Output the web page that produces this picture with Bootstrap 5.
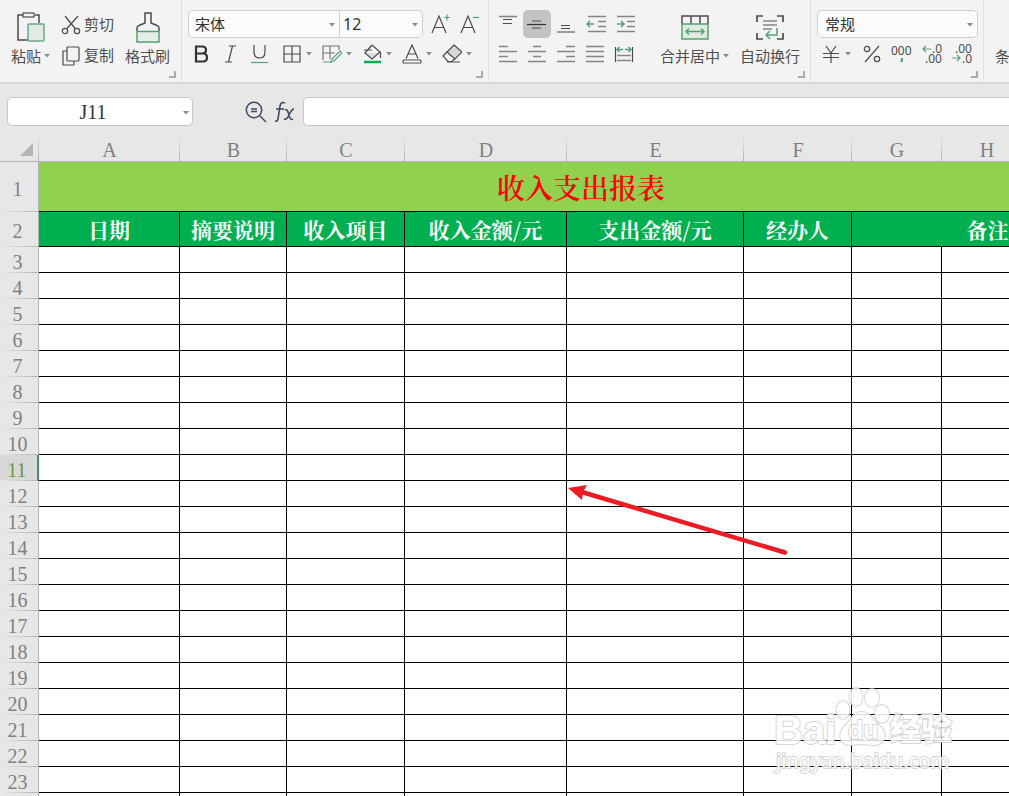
<!DOCTYPE html>
<html lang="zh-CN">
<head>
<meta charset="utf-8">
<meta name="viewport" content="width=device-width, initial-scale=1">
<title>收入支出报表</title>
<link rel="stylesheet" href="https://cdn.jsdelivr.net/npm/bootstrap@5.3.0/dist/css/bootstrap.min.css">
<style>
  body { background: #e7e7e7; font-family: "Noto Sans", "Noto Sans CJK SC", sans-serif; font-size: 15px; color: #505050; min-height: 100vh; overflow: hidden; }
  svg { fill: none; stroke: #4c4c4c; stroke-width: 1.2; flex: none; display: block; }
  svg text { stroke: none; fill: #4c4c4c; }
  .g { stroke: #55a176; }
  .al { stroke: #858585; stroke-width: 1.6; }
  .ribbon { background: #f3f3f3; border-bottom: 2px solid #d8d8d8; height: 84px; }
  .tool-group { position: relative; flex: none; padding-top: 10px; }
  .tool-group + .tool-group { border-left: 1px solid #e1e1e1; background-clip: padding-box; }
  .tool { border: 0; background: none; padding: 0; width: 28px; height: 28px; border-radius: 5px; display: flex; align-items: center; justify-content: center; color: inherit; flex: none; }
  .tool.split { width: 40px; padding-left: 4px; justify-content: flex-start; gap: 4px; }
  .tool.active { background: #c3c3c3; }
  .tool.wide { width: 30px; }
  .pitch { gap: 1px; }
  .tool-rows { display: grid; row-gap: 2px; align-content: start; }
  .big-tool { border: 0; background: none; padding: 0; color: inherit; display: flex; flex-direction: column; align-items: center; line-height: 20px; white-space: nowrap; }
  .big-tool .pic { height: 36px; display: flex; align-items: center; }
  .big-tool .cap { display: flex; align-items: center; gap: 3px; }
  .line-tool { border: 0; background: none; padding: 0; color: inherit; height: 29px; display: flex; align-items: center; gap: 3px; white-space: nowrap; }
  .first-tool { margin-left: 11px; }
  .caret { fill: #8a8a8a; stroke: none; }
  .launcher { position: absolute; right: 5px; bottom: 4px; }
  .pick { position: relative; }
  .pick select { appearance: none; width: 100%; height: 28px; border: 1px solid #cfcfcf; background: #fbfbfb; color: #333; padding: 0 6px; line-height: 26px; }
  .pick .caret { position: absolute; right: 5px; top: 13px; pointer-events: none; }
  .font-name { width: 152px; } .font-name select { border-radius: 5px 0 0 5px; }
  .font-size { width: 84px; margin-left: -1px; } .font-size select { border-radius: 0 5px 5px 0; padding-left: 3px; font-size: 16px; }
  .num-format { width: 161px; } .num-format select { border-radius: 5px; padding-left: 7px; }
  .formula-bar { height: 51px; padding: 13px 0 9px 7px; align-items: flex-start; }
  .name-box { width: 186px; }
  .name-box input, .formula-input { border: 1px solid #c6c6c6; border-radius: 5px; background: #fff; height: 29px; }
  .name-box input { width: 100%; text-align: center; font: 20px "Liberation Serif", serif; color: #333; padding: 2px 14px 0 0; }
  .name-box .caret { position: absolute; right: 4px; top: 14px; }
  .formula-input { border-right: 0; border-radius: 5px 0 0 5px; }
  .bar-tool { border: 0; background: none; padding: 0; height: 29px; display: flex; align-items: center; stroke: #3f4a66; }
  .bar-tool svg { stroke: #3f4a66; }
  .sheet-area { position: relative; overflow: hidden; }
  .sheet { table-layout: fixed; width: 1124px; border-collapse: separate; border-spacing: 0; font-family: "Noto Serif CJK SC", "Noto Sans CJK SC", serif; }
  .sheet th, .sheet td { padding: 0; text-align: center; vertical-align: middle; }
  .sheet td { background: #fff; height: 26px; border-right: 1px solid #000; border-bottom: 1px solid #000; }
  .sheet th { font-family: "Liberation Serif", serif; font-weight: 400; font-size: 20px; line-height: 22px; color: #808080; }
  .sheet thead th { height: 27px; padding-top: 4px; border-bottom: 1px solid #b4b4b4; background: linear-gradient(#e7e7e7, #b4b4b4) right / 1px 100% no-repeat; }
  .sheet tbody th { padding: 3px 3px 0 0; border-right: 1px solid #b4b4b4; background: linear-gradient(90deg, #e7e7e7, #b4b4b4) bottom / 100% 1px no-repeat; }
  .sheet tbody tr.current th { background-color: #d8d8d8; color: #6c9a3c; border-right: 2px solid #3c9a56; }
  .sheet td.report-title { height: 50px; background: #92d050; color: #f00; font-size: 28px; line-height: 36px; font-weight: 600; }
  .sheet .heads td { height: 35px; background: #00b050; color: #fff; font-size: 21px; line-height: 28px; font-weight: 700; white-space: nowrap; }
  .pointer-arrow { position: absolute; left: 566px; top: 348px; }
  .watermark { position: absolute; left: 770px; top: 548px; opacity: .85; }
  .watermark * { fill: #fff; stroke: #d0d0d0; stroke-width: 2; paint-order: stroke; }
</style>
</head>
<body>
<svg width="0" height="0" class="position-absolute" aria-hidden="true"><defs>
  <symbol id="car" viewBox="0 0 6 4"><path d="M0 0h6L3 3.5z" fill="#8a8a8a" stroke="none"/></symbol>
  <symbol id="corner" viewBox="0 0 7 7"><path d="M6 0v6H0" stroke="#aaa" stroke-width="2"/></symbol>
</defs></svg>

<header class="ribbon d-flex overflow-hidden">
  <section class="tool-group d-flex" style="width:181px" aria-label="剪贴板">
    <button class="big-tool first-tool align-self-start" type="button">
      <span class="pic"><svg width="30" height="32" viewBox="0 0 30 32"><path stroke-width="1.500" d="M7 3H2v25h10M19 3h4v8"/><rect x="7" y="1" width="11" height="4"/><rect x="12" y="12" width="16" height="17" rx="1" fill="#e1ebe4" stroke="#6aa886" stroke-width="1.500"/></svg></span>
      <span class="cap">粘贴<svg width="6" height="4"><use href="#car"/></svg></span>
    </button>
    <div class="tool-rows first-tool">
      <button class="line-tool" type="button"><svg width="20" height="20" viewBox="0 0 20 20"><path d="M4 1l10.500 13M17 1L5.500 14"/><circle cx="4" cy="16" r="2.700"/><circle cx="16" cy="16" r="2.700"/></svg>剪切</button>
      <button class="line-tool" type="button"><svg width="20" height="20" viewBox="0 0 20 20"><rect x="6" y="1" width="12" height="14" rx="1"/><path d="M6 5H2v14h11v-4"/></svg>复制</button>
    </div>
    <button class="big-tool first-tool align-self-start" type="button">
      <span class="pic"><svg width="26" height="32" viewBox="0 0 26 32"><path stroke-width="1.500" d="M2 19v-3q0-2 2-2.500l6-2.500V1h6v10l6 2.500q2 .5 2 2.500v3"/><path class="g" stroke-width="1.500" fill="#e5efe8" d="M2 19.500h22V30H2z"/></svg></span>
      <span class="cap">格式刷</span>
    </button>
    <svg class="launcher" width="7" height="7"><use href="#corner"/></svg>
  </section>

  <section class="tool-group tool-rows" style="width:307px;padding-left:6px" aria-label="字体">
    <div class="d-flex">
      <div class="pick font-name"><select aria-label="字体名称"><option>宋体</option></select><svg class="caret" width="6" height="4"><use href="#car"/></svg></div>
      <div class="pick font-size"><select aria-label="字号"><option>12</option></select><svg class="caret" width="6" height="4"><use href="#car"/></svg></div>
      <div class="d-flex pitch ms-1">
        <button class="tool" type="button" aria-label="增大字号"><svg width="20" height="22" viewBox="0 0 20 22"><path d="M1 20L8 3l7 17M3.500 14.500h9"/><path class="g" d="M13 4.500h6M16 1.500v6"/></svg></button>
        <button class="tool" type="button" aria-label="减小字号"><svg width="20" height="22" viewBox="0 0 20 22"><path d="M1 20L8 3l7 17M3.500 14.500h9"/><path class="g" d="M13 4.500h6"/></svg></button>
      </div>
    </div>
    <div class="d-flex">
      <div class="d-flex pitch me-1">
        <button class="tool" type="button" aria-label="加粗"><svg width="20" height="20" viewBox="0 0 20 20"><path stroke-width="2.200" stroke="#333" d="M4 2.500h6q4 0 4 3.500t-4 3.500H4zM4 9.500h7q4 0 4 4t-4 4H4z"/></svg></button>
        <button class="tool" type="button" aria-label="倾斜"><svg width="20" height="20" viewBox="0 0 20 20"><path d="M8 2h7M4 18h7M11.500 2l-4 16"/></svg></button>
        <button class="tool" type="button" aria-label="下划线"><svg width="20" height="22" viewBox="0 0 20 22"><path d="M4 2v7q0 6 5.500 6T15 9V2"/><path class="g" d="M1 19.500h17"/></svg></button>
      </div>
      <button class="tool split" type="button" aria-label="边框"><svg width="20" height="20" viewBox="0 0 20 20"><path d="M2 2h16v16H2zM10 2v16M2 10h16"/></svg><svg width="6" height="4"><use href="#car"/></svg></button>
      <button class="tool split" type="button" aria-label="绘图边框"><svg width="20" height="20" viewBox="0 0 20 20"><path d="M1 16V2h16v4M8 2v13M1 9h12" stroke="#777"/><path class="g" d="M1 18h8M9 18l1-3 8-8 2 2-8 8z"/></svg><svg width="6" height="4"><use href="#car"/></svg></button>
      <button class="tool split" type="button" aria-label="填充颜色"><svg width="20" height="20" viewBox="0 0 20 20"><path d="M4 9h14l-7 6z" fill="#ddd" stroke="none"/><path d="M2 6h8M10 1l8 7-8 7-7-6 7-8M18.500 8v6"/><path d="M2 18h17" stroke="#00b050" stroke-width="2.500"/></svg><svg width="6" height="4"><use href="#car"/></svg></button>
      <button class="tool split" type="button" aria-label="字体颜色"><svg width="20" height="20" viewBox="0 0 20 20"><path d="M4 14.500L10 1l6 13.500M6.500 10h7"/><rect x="1" y="16" width="18" height="3" rx="1" fill="#fff"/></svg><svg width="6" height="4"><use href="#car"/></svg></button>
      <button class="tool split" type="button" aria-label="清除"><svg width="20" height="20" viewBox="0 0 20 20"><path d="M12 1l8 7-7 7-8-7z" fill="#d8d8d8"/><path d="M5 8l-4 4 5 5.500h4l3-3M5 18h13"/></svg><svg width="6" height="4"><use href="#car"/></svg></button>
    </div>
    <svg class="launcher" width="7" height="7"><use href="#corner"/></svg>
  </section>

  <section class="tool-group d-flex" style="width:322px;padding-left:5px" aria-label="对齐方式">
    <div class="tool-rows">
      <div class="d-flex pitch">
        <button class="tool" type="button" aria-label="顶端对齐"><svg width="20" height="20" viewBox="0 0 20 20"><path class="al" d="M1 2.500h18"/><path d="M5 5.500h9M5 9.500h9"/></svg></button>
        <button class="tool active" type="button" aria-label="垂直居中"><svg width="20" height="20" viewBox="0 0 20 20"><path d="M5 7h9M5 14h9"/><path stroke="#333" d="M0 10.500h19"/></svg></button>
        <button class="tool" type="button" aria-label="底端对齐"><svg width="20" height="20" viewBox="0 0 20 20"><path d="M5 11.500h9M5 14.500h9"/><path class="al" d="M1 18h18"/></svg></button>
        <button class="tool wide" type="button" aria-label="减少缩进"><svg width="20" height="20" viewBox="0 0 20 20"><path class="al" d="M2 2.500h18M12 7.500h8M12 12.500h8M2 17.500h18"/><path class="g" stroke-width="1.500" d="M8 10H1M4 7l-3 3 3 3"/></svg></button>
        <button class="tool" type="button" aria-label="增加缩进"><svg width="20" height="20" viewBox="0 0 20 20"><path class="al" d="M1 2.500h18M11 7.500h8M11 12.500h8M1 17.500h18"/><path class="g" stroke-width="1.500" d="M1 10h7M5 7l3 3-3 3"/></svg></button>
      </div>
      <div class="d-flex pitch">
        <button class="tool" type="button" aria-label="左对齐"><svg width="20" height="20" viewBox="0 0 20 20"><path class="al" d="M1 2.500h9M1 7.500h18M1 12.500h9M1 17.500h18"/></svg></button>
        <button class="tool" type="button" aria-label="水平居中"><svg width="20" height="20" viewBox="0 0 20 20"><path class="al" d="M6 2.500h8M1 7.500h18M6 12.500h8M1 17.500h18"/></svg></button>
        <button class="tool" type="button" aria-label="右对齐"><svg width="20" height="20" viewBox="0 0 20 20"><path class="al" d="M10 2.500h9M1 7.500h18M10 12.500h9M1 17.500h18"/></svg></button>
        <button class="tool" type="button" aria-label="两端对齐"><svg width="20" height="20" viewBox="0 0 20 20"><path class="al" d="M1 2.500h18M1 7.500h18M1 12.500h18M1 17.500h18"/></svg></button>
        <button class="tool" type="button" aria-label="分散对齐"><svg width="20" height="20" viewBox="0 0 20 20"><path d="M1.500 3v15M18.500 3v15"/><path class="al" d="M3 11.500h14M3 16.500h14"/><path class="g" stroke-width="1.500" d="M9 5.500H3M5.500 3L3 5.500 5.500 8M11 5.500h6M14.500 3L17 5.500 14.500 8"/></svg></button>
      </div>
    </div>
    <button class="big-tool ms-3 ps-1 align-self-start" type="button">
      <span class="pic"><svg width="30" height="28" viewBox="0 0 30 28"><path stroke-width="1.500" d="M2 10V2h26v8M11 2v8M20 2v8"/><path class="g" stroke-width="1.500" fill="#dfeae2" d="M2 10h26v15H2z"/><path class="g" stroke-width="1.500" d="M6 17.500h18M9 14.500l-3 3 3 3M21 14.500l3 3-3 3"/></svg></span>
      <span class="cap">合并居中<svg width="6" height="4"><use href="#car"/></svg></span>
    </button>
    <button class="big-tool first-tool align-self-start" type="button">
      <span class="pic"><svg width="30" height="28" viewBox="0 0 30 28"><path stroke-width="1.700" d="M2 8V2h6M22 2h6v6M2 19v6h6M22 25h6v-6"/><path class="al" d="M8 7h14M8 11h14M8 15h9"/><path class="g" stroke-width="1.500" d="M22 14v7H12M15 17l-4 4 4 4"/></svg></span>
      <span class="cap">自动换行</span>
    </button>
    <svg class="launcher" width="7" height="7"><use href="#corner"/></svg>
  </section>

  <section class="tool-group tool-rows" style="width:173px;padding-left:6px" aria-label="数字">
    <div class="pick num-format"><select aria-label="数字格式"><option>常规</option></select><svg class="caret" width="6" height="4"><use href="#car"/></svg></div>
    <div class="d-flex">
      <button class="tool split" type="button" aria-label="货币样式"><svg width="20" height="20" viewBox="0 0 20 20"><path d="M5 2l5 7 5-7M2 9.500h16M2 13.500h16M10 9v10"/></svg><svg width="6" height="4"><use href="#car"/></svg></button>
      <button class="tool wide" type="button" aria-label="百分比"><svg width="20" height="20" viewBox="0 0 20 20"><path d="M17 2L3 18"/><circle cx="5" cy="5" r="2.700"/><circle cx="15" cy="15" r="2.700"/></svg></button>
      <button class="tool wide" type="button" aria-label="千位分隔"><svg width="24" height="24" viewBox="0 0 24 24" font-size="12"><text x="1" y="13">000</text><path class="g" stroke-width="2" d="M12 16v2l-1 2"/></svg></button>
      <button class="tool wide" type="button" aria-label="增加小数位数"><svg width="24" height="28" viewBox="0 0 24 28" font-size="12"><text x="12" y="13">.0</text><text x="5" y="23">.00</text><path class="g" d="M11 9H3M6 6L3 9l3 3"/></svg></button>
      <button class="tool wide" type="button" aria-label="减少小数位数"><svg width="24" height="28" viewBox="0 0 24 28" font-size="12"><text x="5" y="13">.00</text><text x="12" y="23">.0</text><path class="g" d="M2 18h8M7 15l3 3-3 3"/></svg></button>
    </div>
    <svg class="launcher" width="7" height="7"><use href="#corner"/></svg>
  </section>
  <section class="tool-group" aria-label="样式"><button class="big-tool first-tool" type="button"><span class="pic"></span><span class="cap">条</span></button></section>
</header>

<div class="formula-bar d-flex">
  <div class="name-box position-relative flex-shrink-0"><input type="text" value="J11" aria-label="名称框"><svg class="caret" width="6" height="4"><use href="#car"/></svg></div>
  <div class="d-flex gap-2 ms-5 ps-1 pe-2">
    <button class="bar-tool" type="button" aria-label="查找"><svg width="22" height="22" viewBox="0 0 22 22"><circle cx="9" cy="9" r="7.700" stroke-width="1.500"/><path stroke-width="1.500" d="M15 15l6 6M6 8h6M6 10.500h6"/></svg></button>
    <button class="bar-tool" type="button" aria-label="插入函数"><svg width="20" height="24" viewBox="0 0 20 24"><path stroke-width="1.600" d="M10 3q-4-2-5 3L3 19q-1 3-3 2M1 9h8M10 10q2-1 3 2l2 6q1 2 3 1M19 9q-2 0-4 4l-2 4q-2 3-4 2"/></svg></button>
  </div>
  <input class="formula-input flex-grow-1" type="text" aria-label="编辑栏">
</div>

<main class="sheet-area">
  <table class="sheet">
    <colgroup><col style="width:39px"><col style="width:141px"><col style="width:107px"><col style="width:118px"><col style="width:162px"><col style="width:177px"><col style="width:108px"><col style="width:90px"><col style="width:90px"><col style="width:92px"></colgroup>
    <thead><tr><th aria-label="全选"><svg class="ms-auto me-1" width="15" height="15" viewBox="0 0 15 15"><path d="M13 0v13H0z" fill="#b5b5b5" stroke="none"/></svg></th><th>A</th><th>B</th><th>C</th><th>D</th><th>E</th><th>F</th><th>G</th><th>H</th><th></th></tr></thead>
    <tbody id="rows">
      <tr><th>1</th><td class="report-title" colspan="9">收入支出报表</td></tr>
      <tr class="heads"><th>2</th><td>日期</td><td>摘要说明</td><td>收入项目</td><td>收入金额/元</td><td>支出金额/元</td><td>经办人</td><td colspan="3">备注</td></tr>
    </tbody>
  </table>
  <svg class="pointer-arrow" width="224" height="74" viewBox="566 483 224 74" aria-hidden="true"><path d="M580 491.500L785 552.500" stroke="#ed1c24" stroke-width="4.500" stroke-linecap="round"/><path d="M568 488l19-3-4 7-1 8z" fill="#ed1c24" stroke="none"/></svg>
  <svg class="watermark" width="190" height="98" viewBox="770 683 190 98" font-family="Liberation Sans, sans-serif">
    <text x="774" y="744" font-size="40" font-weight="700">Bai</text>
    <ellipse cx="843" cy="710" rx="6.500" ry="9"/><ellipse cx="856" cy="697" rx="6.500" ry="9"/><ellipse cx="872" cy="698" rx="7" ry="9"/><ellipse cx="882" cy="714" rx="7" ry="9"/>
    <path d="M862 712c8 0 10 7 18 14 9 9 4 19-6 19-8 0-14-2-22 0-12 1-15-10-8-18 8-7 8-15 18-15z"/>
    <text x="848" y="739" font-size="25" font-weight="700">du</text>
    <text x="890" y="740" font-size="31" font-weight="900" font-family="Noto Sans CJK SC, sans-serif">经验</text>
    <text x="776" y="768" font-size="20" font-family="Noto Sans, sans-serif">jingyan.baidu.com</text>
  </svg>
</main>
<script>
  const rows = document.getElementById('rows');
  for (let n = 3; n <= 24; n++) {
    const row = rows.insertRow();
    if (n === 11) row.className = 'current';
    const head = document.createElement('th');
    head.textContent = n < 24 ? n : '';
    row.append(head);
    for (let c = 0; c < 9; c++) row.insertCell();
  }
</script>
<script src="https://cdn.jsdelivr.net/npm/bootstrap@5.3.0/dist/js/bootstrap.bundle.min.js"></script>
</body>
</html>
